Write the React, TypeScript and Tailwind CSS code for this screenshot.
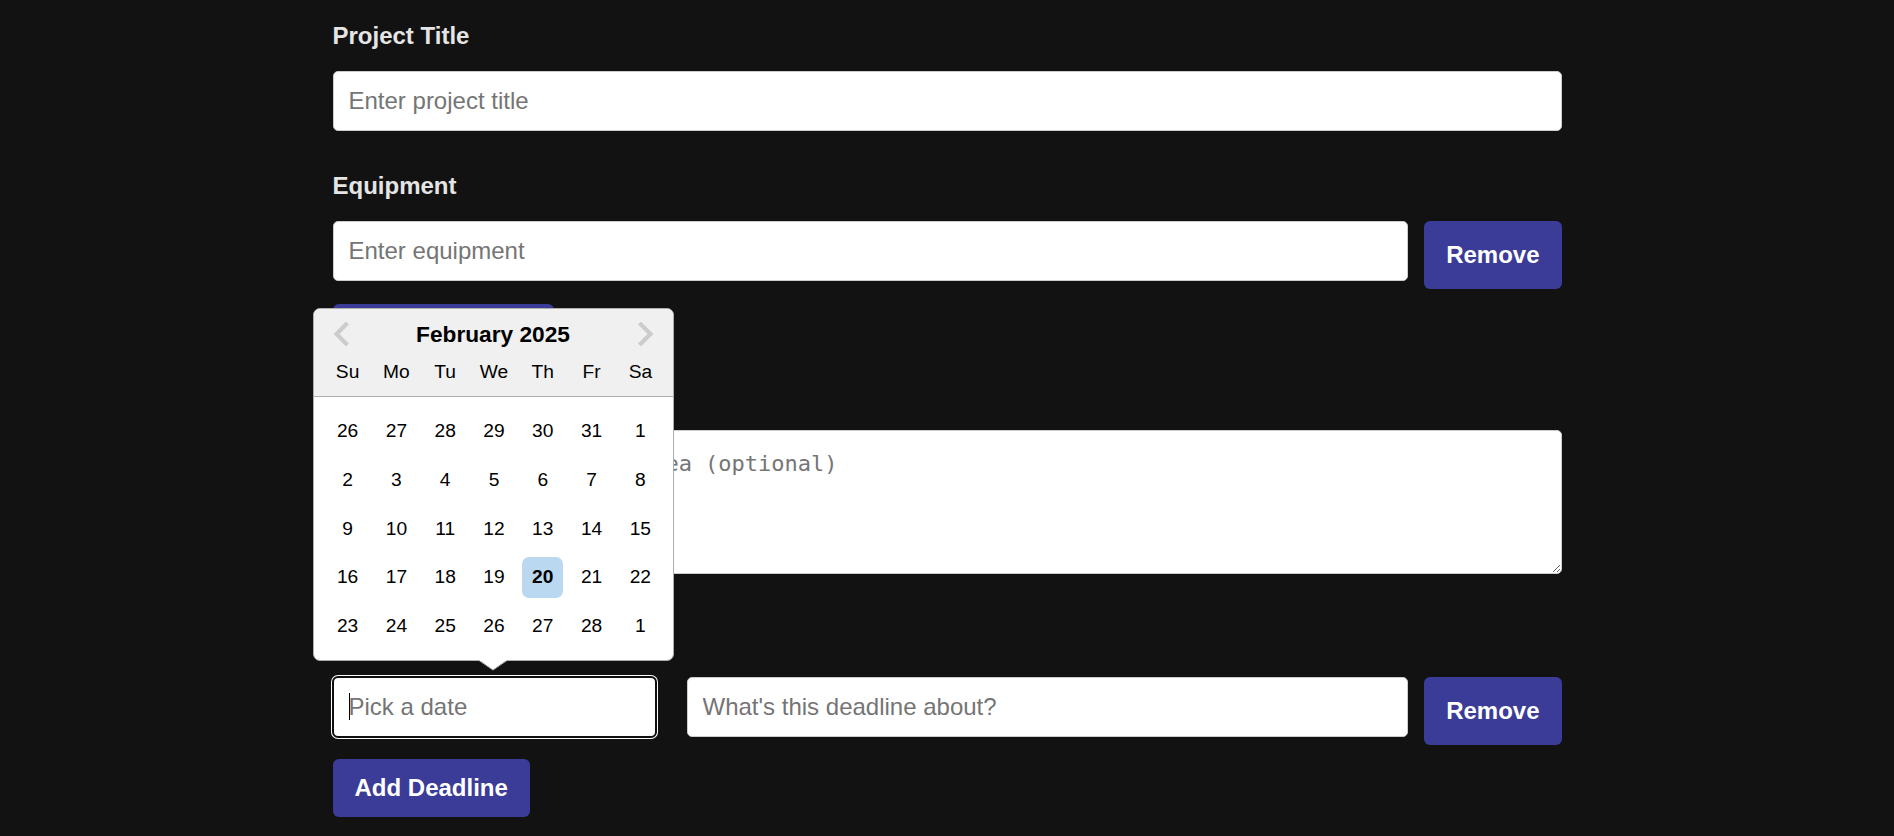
import * as React from "react";

const inputBase =
  "block h-[60px] w-full rounded-[5px] border border-[#cccccc] bg-white px-[15px] text-[24px] text-black placeholder:text-[#757575]";
const inputCls = inputBase + " outline-none";

const buttonCls =
  "flex-none rounded-[6px] bg-[#3b3b98] px-[22px] text-[24px] font-bold leading-none text-white";

const weeks = [
  [26, 27, 28, 29, 30, 31, 1],
  [2, 3, 4, 5, 6, 7, 8],
  [9, 10, 11, 12, 13, 14, 15],
  [16, 17, 18, 19, 20, 21, 22],
  [23, 24, 25, 26, 27, 28, 1],
];

const dayNames = ["Su", "Mo", "Tu", "We", "Th", "Fr", "Sa"];

function Label({children, className = ""}: {children: React.ReactNode; className?: string}) {
  return (
    <label className={"mb-[21px] block text-[24px] font-bold leading-[28px] text-[#e5e5e5] " + className}>
      {children}
    </label>
  );
}

function Chevron({flip}: {flip?: boolean}) {
  return (
    <svg width="16" height="24" viewBox="0 0 16 24" className={flip ? "-scale-x-100" : ""}>
      <polyline points="14.5,1 3.5,12 14.5,23" fill="none" stroke="#cccccc" strokeWidth="4.2" />
    </svg>
  );
}

function DatePopup() {
  return (
    <div className="absolute -left-[20px] bottom-[76px] z-10 w-[361px] rounded-[7px] border border-[#aeaeae] bg-white text-black">
      <div className="rounded-t-[6px] border-b border-[#aeaeae] bg-[#f0f0f0] pt-[12px] pb-[4px]">
        <div className="flex h-[26px] items-center px-[19px]">
          <Chevron />
          <div className="flex-1 text-center text-[22.7px] font-bold leading-[26px]">February 2025</div>
          <Chevron flip />
        </div>
        <div className="mt-[4px] grid grid-cols-[repeat(7,40.8px)] justify-center gap-x-[8px] pl-[2px]">
          {dayNames.map((d) => (
            <div key={d} className="text-center text-[19.2px] leading-[41px]">
              {d}
            </div>
          ))}
        </div>
      </div>
      <div className="grid grid-cols-[repeat(7,40.8px)] grid-rows-[repeat(5,40.8px)] justify-center gap-[8px] pt-[14px] pb-[13px] pl-[2px]">
        {weeks.flat().map((d, i) => (
          <div
            key={i}
            className={
              "flex items-center justify-center rounded-[7px] text-[19.2px] " +
              (i === 25 ? "bg-[#bad9f1] font-bold" : "")
            }
          >
            {d}
          </div>
        ))}
      </div>
      <svg width="28" height="11" viewBox="0 0 28 11" className="absolute left-1/2 top-full -translate-x-1/2">
        <polygon points="0,0 14,10 28,0" fill="#ffffff" />
        <polyline points="0,0.5 14,10 28,0.5" fill="none" stroke="#aeaeae" strokeWidth="1" />
      </svg>
    </div>
  );
}

export default function App() {
  return (
    <div className="min-h-[836px] bg-[#121212] font-['Liberation_Sans',Arial,sans-serif]">
      <form className="mx-auto w-[1229px] pt-[22px] pb-[19px]" onSubmit={(e) => e.preventDefault()}>
        <Label>Project Title</Label>
        <input className={inputCls} placeholder="Enter project title" />

        <Label className="mt-[41px]">Equipment</Label>
        <div className="flex items-start gap-[16px]">
          <input className={inputCls + " flex-1"} placeholder="Enter equipment" />
          <button type="button" className={buttonCls + " h-[68px]"}>
            Remove
          </button>
        </div>
        <button type="button" className={buttonCls + " mt-[15px] h-[58px]"}>
          Add Equipment
        </button>

        <Label className="mt-[19px]">Project Idea</Label>
        <textarea
          className="block h-[144px] w-full rounded-[5px] border border-[#cccccc] bg-white px-[14px] pt-[16px] font-['DejaVu_Sans_Mono',monospace] text-[22px] text-black outline-none placeholder:text-[#757575]"
          placeholder="Describe your project idea (optional)"
        />

        <Label className="mt-[54px]">Deadlines</Label>
        <div className="flex items-start">
          <div className="relative w-[323px] flex-none">
            <DatePopup />
            <input
              className={inputBase + " border-[#101010] outline-solid outline-2 -outline-offset-1 outline-[#101010] shadow-[0_0_0_2px_#ffffff]"}
              placeholder="Pick a date"
            />
            <span className="pointer-events-none absolute left-[16px] top-[16px] h-[27px] w-px bg-black" />
          </div>
          <input className={inputCls + " ml-[31px] flex-1"} placeholder="What's this deadline about?" />
          <button type="button" className={buttonCls + " ml-[16px] h-[68px]"}>
            Remove
          </button>
        </div>
        <button type="button" className={buttonCls + " mt-[14px] h-[58px]"}>
          Add Deadline
        </button>
      </form>
    </div>
  );
}
